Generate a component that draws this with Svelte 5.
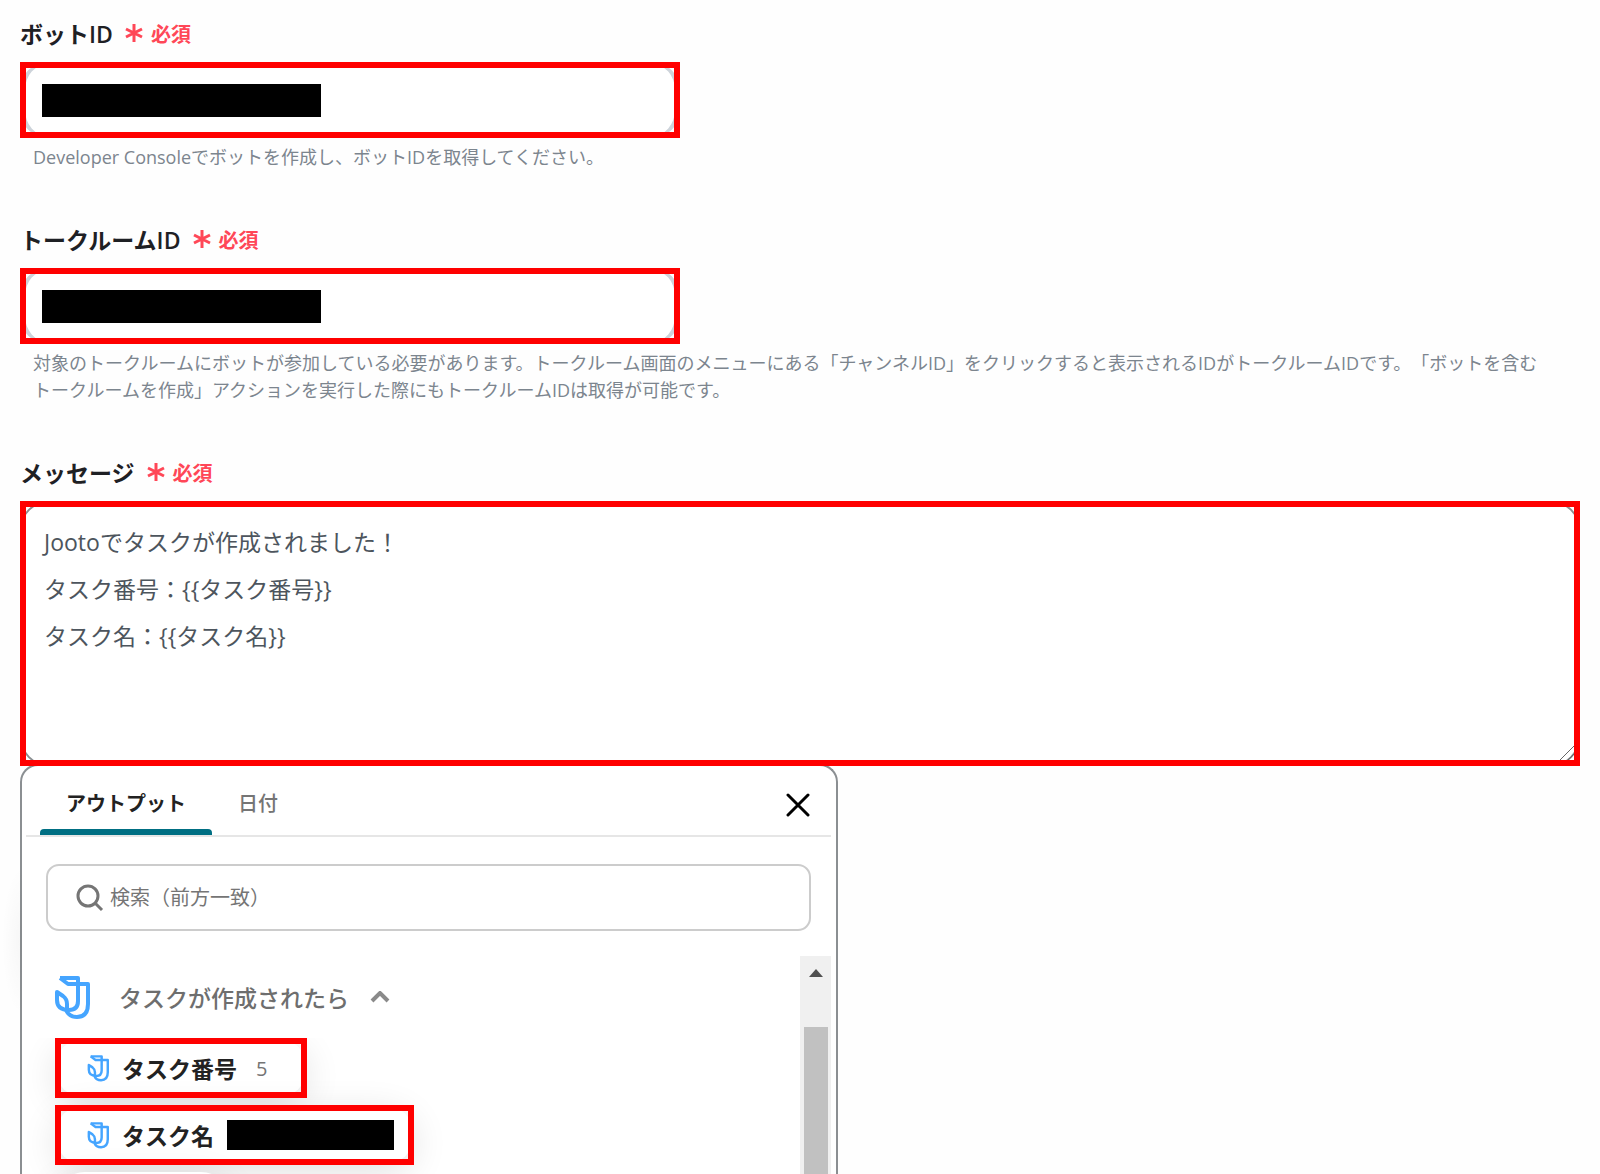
<script lang="ts">
  interface Output {
    name: string;
    value?: string;
    masked?: boolean;
    marked?: boolean;
  }

  const outputs: Output[] = [
    { name: 'タスク番号', value: '5', marked: true },
    { name: 'タスク名', masked: true, marked: true },
    { name: '' },
  ];

  let tab = $state('output');
  let open = $state(true);
  let botId = $state('');
  let roomId = $state('');
  let query = $state('');
  let message = $state(
    'Jootoでタスクが作成されました！\nタスク番号：{{タスク番号}}\nタスク名：{{タスク名}}'
  );
</script>

{#snippet required()}
  <span class="required">
    <svg width="18" height="18" viewBox="0 0 18 18" aria-hidden="true">
      <path d="M9 0v18M1 5l16 8M17 5L1 13" />
    </svg>
    必須
  </span>
{/snippet}

{#snippet logo()}
  <svg class="logo" viewBox="0 0 36 44" aria-hidden="true">
    <path d="M6 3H24V26q0 9-9 9Q3 35 3 25V17l6 4q4 3 4 8v6" />
    <path d="M6 3l8 6h20v20q0 13-11 13-8 0-11-7" />
  </svg>
{/snippet}

<main class="form">
  <section class="field">
    <label class="field__label" for="bot-id">ボットID {@render required()}</label>
    <div class="control control--short">
      <input id="bot-id" type="text" bind:value={botId} />
      <span class="mask mask--input"></span>
    </div>
    <p class="field__help">Developer Consoleでボットを作成し、ボットIDを取得してください。</p>
  </section>

  <section class="field">
    <label class="field__label" for="room-id">トークルームID {@render required()}</label>
    <div class="control control--short">
      <input id="room-id" type="text" bind:value={roomId} />
      <span class="mask mask--input"></span>
    </div>
    <p class="field__help">
      対象のトークルームにボットが参加している必要があります。トークルーム画面のメニューにある「チャンネルID」をクリックすると表示されるIDがトークルームIDです。「ボットを含むトークルームを作成」アクションを実行した際にもトークルームIDは取得が可能です。
    </p>
  </section>

  <section class="field field--message">
    <label class="field__label" for="message">メッセージ {@render required()}</label>
    <div class="control">
      <textarea id="message" bind:value={message}></textarea>
      <svg class="grip" width="18" height="18" viewBox="0 0 18 18" aria-hidden="true">
        <path d="M1 17L17 1M9 17l8-8" />
      </svg>
    </div>
  </section>

  <section class="picker">
    <div class="picker__head">
      <div class="tabs" role="tablist">
        <button
          type="button"
          role="tab"
          class="tab"
          class:tab--active={tab === 'output'}
          aria-selected={tab === 'output'}
          onclick={() => (tab = 'output')}>アウトプット</button
        >
        <button
          type="button"
          role="tab"
          class="tab"
          class:tab--active={tab === 'date'}
          aria-selected={tab === 'date'}
          onclick={() => (tab = 'date')}>日付</button
        >
      </div>
      <button type="button" class="close" aria-label="閉じる">
        <svg width="24" height="24" viewBox="0 0 24 24" aria-hidden="true">
          <path d="M2 2l20 20M22 2L2 22" />
        </svg>
      </button>
    </div>

    <label class="search">
      <svg width="28" height="28" viewBox="0 0 28 28" aria-hidden="true">
        <circle cx="12" cy="12" r="10" />
        <path d="M19 19l7 7" />
      </svg>
      <input type="text" placeholder="検索（前方一致）" aria-label="検索" bind:value={query} />
    </label>

    <div class="picker__body">
      <div class="group">
        <button type="button" class="group__head" aria-expanded={open} onclick={() => (open = !open)}>
          {@render logo()}
          タスクが作成されたら
          <svg class="chevron" width="20" height="12" viewBox="0 0 20 12" aria-hidden="true">
            <path d="M2 10l8-8 8 8" />
          </svg>
        </button>
        {#if open}
          <ul class="items">
            {#each outputs as item}
              <li class="item" class:item--marked={item.marked}>
                <button type="button" class="pill" aria-label={item.name || 'アウトプット'}>
                  {@render logo()}
                  <span>{item.name}</span>
                  {#if item.value}
                    <span class="pill__value">{item.value}</span>
                  {/if}
                  {#if item.masked}
                    <span class="mask mask--value"></span>
                  {/if}
                </button>
              </li>
            {/each}
          </ul>
        {/if}
      </div>
      <div class="scrollbar" aria-hidden="true">
        <svg width="14" height="8" viewBox="0 0 14 8"><path d="M7 0l7 8H0z" /></svg>
        <div class="scrollbar__thumb"></div>
      </div>
    </div>
  </section>
</main>

<style>
  :global(body) {
    background: #fefefe;
  }

  .form,
  .form :is(button, input, textarea) {
    font-family: 'Open Sans', 'Noto Sans CJK JP', sans-serif;
    text-spacing-trim: space-all;
  }

  .form {
    box-sizing: border-box;
    display: flex;
    flex-direction: column;
    height: 100vh;
    min-height: 1000px;
    padding: 16px 20px 0;
    overflow: hidden;
  }

  .form *,
  .form *::before,
  .form *::after {
    box-sizing: border-box;
  }

  button {
    padding: 0;
    border: 0;
    background: none;
    cursor: pointer;
  }

  svg {
    flex: none;
    fill: none;
    stroke: currentColor;
  }

  .field {
    margin-bottom: 51px;
  }

  .field--message {
    margin-bottom: 0;
  }

  .field__label {
    display: flex;
    align-items: center;
    gap: 12px;
    height: 34px;
    margin-bottom: 12px;
    color: #1e2024;
    font-size: 23px;
    font-weight: 600;
  }

  .required {
    display: flex;
    align-items: center;
    gap: 8px;
    color: #ff4757;
    font-size: 20px;
    font-weight: 600;
  }

  .required svg {
    stroke-width: 3;
  }

  .field__help {
    margin: 6px 0 0;
    padding: 0 26px 0 13px;
    color: #7c858e;
    font-size: 18px;
    line-height: 27px;
  }

  .control {
    position: relative;
  }

  .control--short {
    width: 660px;
    max-width: 100%;
  }

  /* red highlight drawn over the control */
  .control::after,
  .item--marked::after {
    content: '';
    position: absolute;
    inset: 0;
    z-index: 2;
    border: 6px solid #f00;
    pointer-events: none;
  }

  .control input {
    display: block;
    width: 100%;
    height: 76px;
    padding: 0 24px;
    border: 5px solid #cdd3da;
    border-width: 2px 5px;
    border-radius: 28px;
    background: #fff;
    font-size: 23px;
  }

  .control textarea {
    display: block;
    width: 100%;
    height: 265px;
    padding: 16px 22px;
    border: 2px solid #8b8f92;
    border-radius: 28px;
    background: #fff;
    color: #4d555d;
    font-size: 23px;
    line-height: 47px;
    resize: none;
  }

  .grip {
    position: absolute;
    right: 4px;
    bottom: 4px;
    color: #666;
  }

  .mask {
    background: #000;
  }

  .mask--input {
    position: absolute;
    top: 22px;
    left: 22px;
    width: 279px;
    height: 33px;
  }

  .mask--value {
    width: 167px;
    height: 30px;
  }

  .picker {
    position: relative;
    display: flex;
    flex: 1;
    flex-direction: column;
    width: 818px;
    max-width: 100%;
    min-height: 0;
    margin-top: -2px;
    padding: 0 5px 0 4px;
    border: 2px solid #8b8f92;
    border-bottom: 0;
    border-radius: 18px 18px 0 0;
    background: #fff;
  }

  /* soft shade at the left edge */
  .picker::before {
    content: '';
    position: absolute;
    top: 100px;
    right: 100%;
    width: 20px;
    height: 150px;
    background: radial-gradient(closest-side at 100% 50%, rgba(0, 0, 0, 0.03), transparent);
    background: radial-gradient(20px 75px at 100% 50%, rgba(0, 0, 0, 0.03), transparent);
  }

  .picker__head {
    display: flex;
    justify-content: space-between;
    padding: 0 21px 0 14px;
    border-bottom: 2px solid #e6e6e6;
  }

  .tabs {
    display: flex;
  }

  .tab {
    position: relative;
    height: 69px;
    padding: 4px 26px 0;
    color: #757575;
    font-size: 20px;
    font-weight: 500;
  }

  .tab--active {
    color: #222;
    font-weight: 600;
  }

  .tab--active::after {
    content: '';
    position: absolute;
    inset: auto 0 0;
    height: 6px;
    border-radius: 4px 4px 0 0;
    background: #006f83;
  }

  .close {
    display: flex;
    align-items: center;
    padding-top: 8px;
    color: #000;
  }

  .close svg {
    stroke-width: 3;
    stroke-linecap: round;
  }

  .search {
    display: flex;
    align-items: center;
    gap: 6px;
    height: 67px;
    margin: 27px 20px 25px;
    padding: 0 28px;
    border: 2px solid #ccc;
    border-radius: 13px;
    color: #757575;
  }

  .search svg {
    stroke-width: 3;
  }

  .search input {
    flex: 1;
    min-width: 0;
    padding: 0;
    border: 0;
    outline: 0;
    background: none;
    font-size: 20px;
  }

  .search input::placeholder {
    color: #757575;
  }

  .picker__body {
    display: flex;
    flex: 1;
    min-height: 0;
  }

  .group {
    display: flex;
    flex: 1;
    flex-direction: column;
    min-height: 0;
  }

  .group__head {
    display: flex;
    flex: none;
    align-items: center;
    gap: 29px;
    height: 82px;
    padding-left: 28px;
    color: #6e6e6e;
    font-size: 23px;
    font-weight: 500;
  }

  .chevron {
    margin-left: -8px;
    color: #8a8a8a;
    stroke-width: 4;
  }

  .logo {
    width: 36px;
    height: 44px;
    color: #45a5ff;
    stroke-width: 4;
    stroke-linejoin: round;
  }

  .items {
    display: flex;
    flex: 1;
    flex-direction: column;
    align-items: flex-start;
    gap: 7px;
    min-height: 0;
    margin: 0;
    padding: 0 29px;
    overflow: hidden;
    list-style: none;
  }

  .item {
    position: relative;
    flex: none;
  }

  .pill {
    display: flex;
    align-items: center;
    gap: 13px;
    min-width: 176px;
    height: 60px;
    padding: 0 20px 0 32px;
    border-radius: 30px;
    background: #fff;
    box-shadow: 0 8px 36px rgba(0, 0, 0, 0.12);
    color: #222;
    font-size: 23px;
    font-weight: 600;
  }

  .pill .logo {
    width: 22px;
    height: 28px;
  }

  .pill__value {
    padding: 0 20px 0 6px;
    color: #757575;
    font-size: 20px;
    font-weight: 400;
  }

  .scrollbar {
    display: flex;
    flex-direction: column;
    align-items: center;
    gap: 50px;
    width: 31px;
    padding-top: 13px;
    background: #f0f0f0;
  }

  .scrollbar svg {
    fill: #505050;
    stroke: none;
  }

  .scrollbar__thumb {
    flex: 1;
    width: 24px;
    background: #c1c1c1;
  }
</style>
